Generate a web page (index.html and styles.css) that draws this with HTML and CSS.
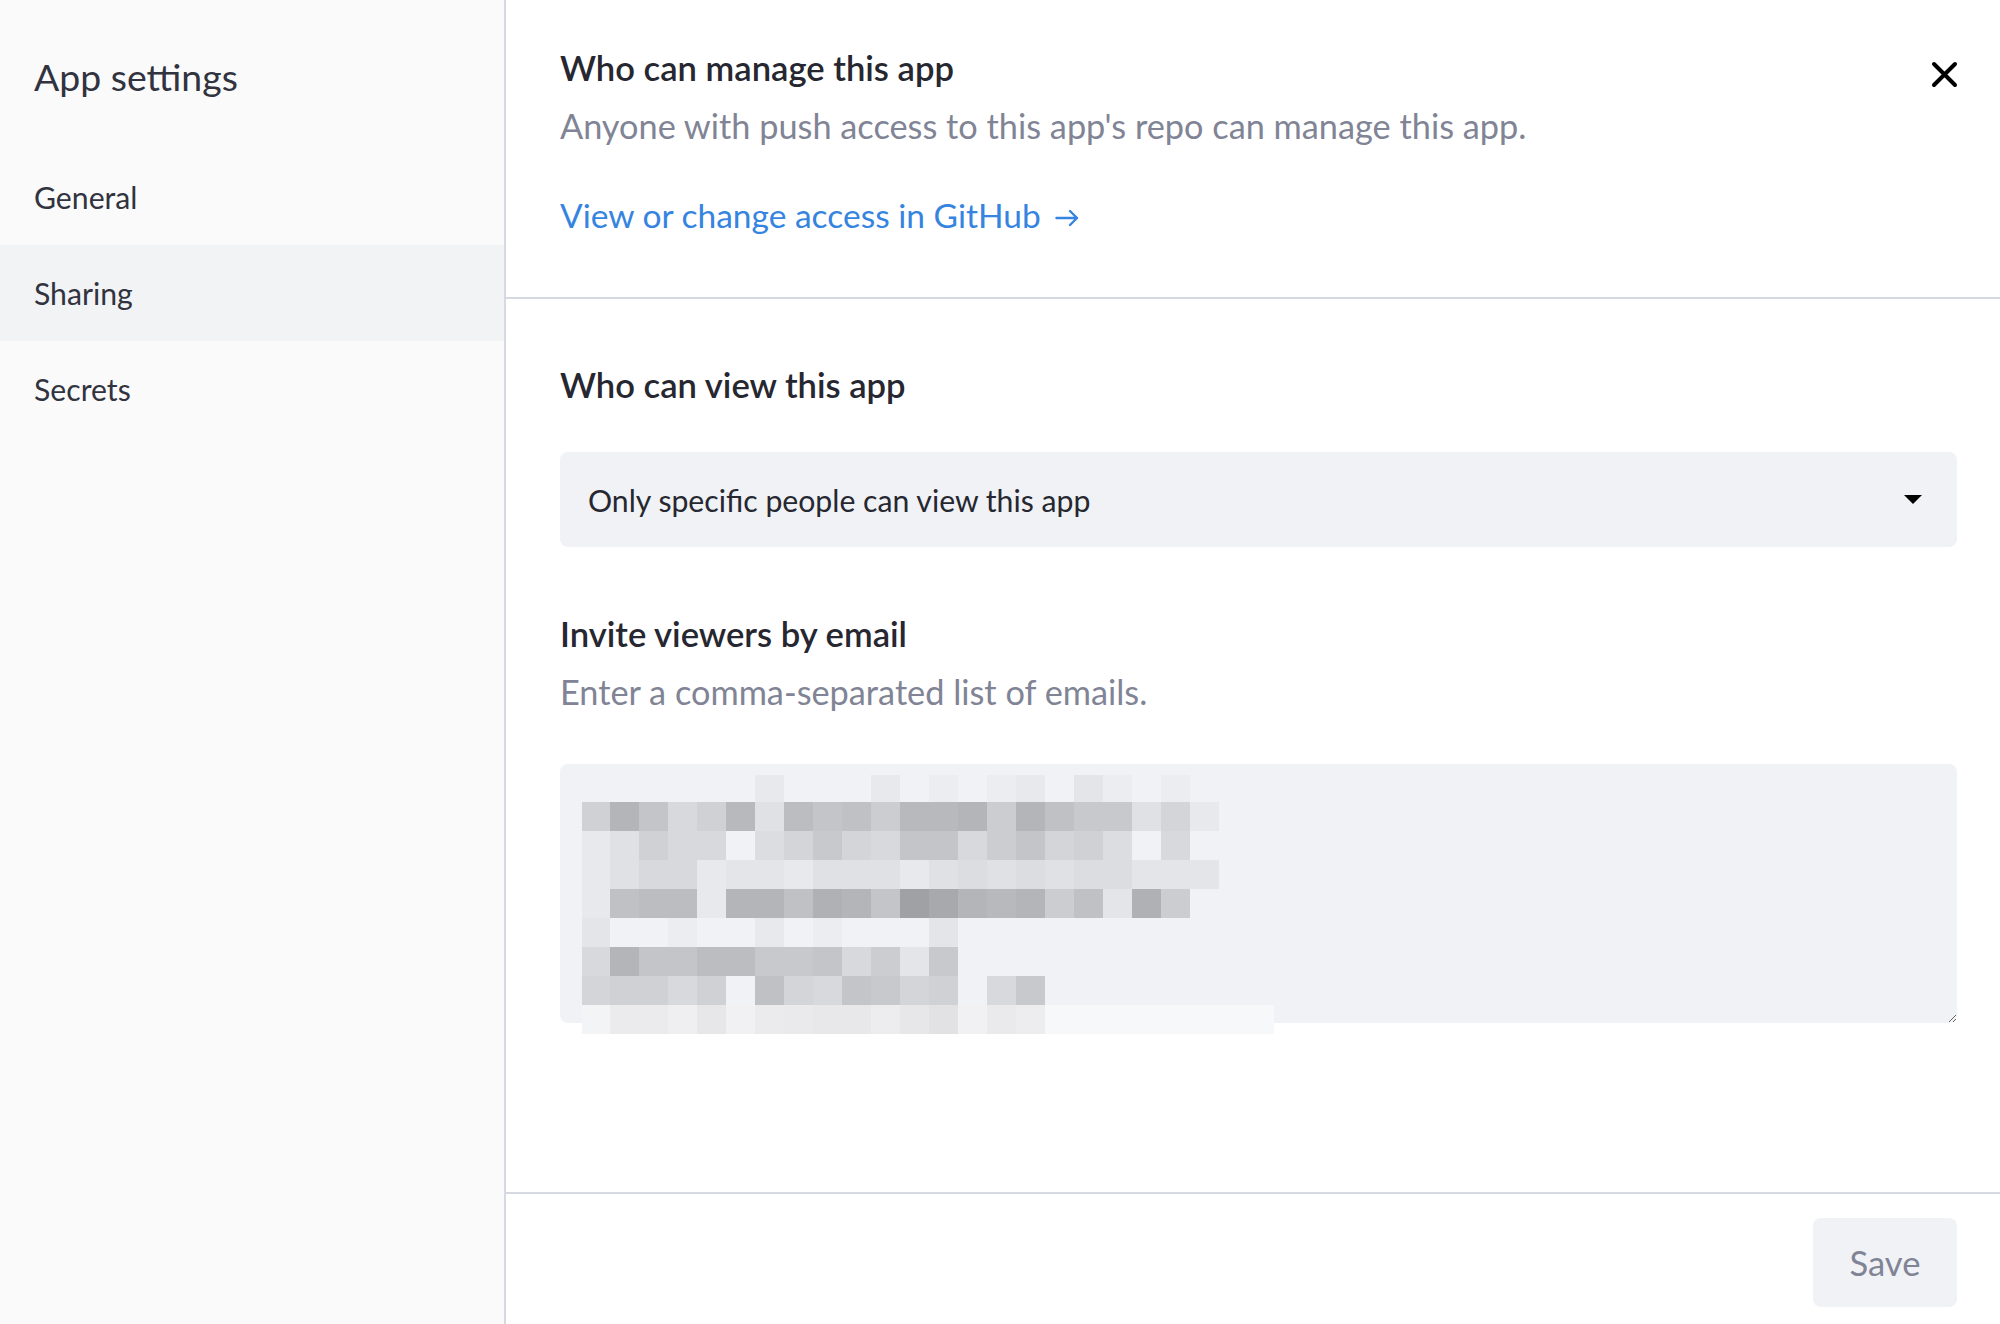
FILE: index.html
```html
<!DOCTYPE html>
<html lang="en">
<head>
<meta charset="utf-8">
<title>App settings</title>
<link rel="stylesheet" href="styles.css">
</head>
<body>
<div class="dialog">
  <aside class="sidebar">
    <h2 class="side-title">App settings</h2>
    <nav class="nav">
      <a class="nav-item">General</a>
      <a class="nav-item active">Sharing</a>
      <a class="nav-item">Secrets</a>
    </nav>
  </aside>
  <main class="panel">
    <section class="manage">
      <div class="manage-text">
        <h3 class="label">Who can manage this app</h3>
        <p class="hint">Anyone with push access to this app's repo can manage this app.</p>
        <a class="gh-link">View or change access in GitHub<svg class="arrow" width="24" height="18" viewBox="0 0 24 18"><path d="M1.5 9H22M15 2L22 9L15 16" fill="none" stroke="currentColor" stroke-width="2.4" stroke-linecap="round" stroke-linejoin="round"/></svg></a>
      </div>
      <button class="close" aria-label="Close"><svg width="27" height="27" viewBox="0 0 27 27"><path d="M3 3L24 24M24 3L3 24" stroke="#000" stroke-width="4" stroke-linecap="round"/></svg></button>
    </section>
    <section class="view">
      <h3 class="label">Who can view this app</h3>
      <div class="select"><span>Only specific people can view this app</span><svg class="caret" width="18" height="9" viewBox="0 0 18 9"><path d="M0 0H18L9 9Z" fill="#000"/></svg></div>
      <h3 class="label invite">Invite viewers by email</h3>
      <p class="hint">Enter a comma-separated list of emails.</p>
      <div class="email-box">
        <textarea class="emails" aria-label="Emails"></textarea>
        <div class="pixels" aria-hidden="true">
          <div class="pxrow r0"><span></span><span></span><span></span><span></span><span></span><span></span><span class="g-e8"></span><span></span><span></span><span></span><span class="g-e8"></span><span></span><span class="g-ec"></span><span></span><span class="g-ec"></span><span class="g-e8"></span><span></span><span class="g-e4"></span><span class="g-ec"></span><span></span><span class="g-ec"></span></div>
          <div class="pxrow"><span class="g-d0"></span><span class="g-b4"></span><span class="g-c4"></span><span class="g-d8"></span><span class="g-d0"></span><span class="g-b8"></span><span class="g-e0"></span><span class="g-bc"></span><span class="g-c4"></span><span class="g-c0"></span><span class="g-cc"></span><span class="g-b8"></span><span class="g-b8"></span><span class="g-b4"></span><span class="g-cc"></span><span class="g-b4"></span><span class="g-c0"></span><span class="g-c8"></span><span class="g-c8"></span><span class="g-e0"></span><span class="g-d4"></span><span class="g-e8"></span></div>
          <div class="pxrow"><span class="g-e8"></span><span class="g-e0"></span><span class="g-d0"></span><span class="g-d8"></span><span class="g-d8"></span><span></span><span class="g-dc"></span><span class="g-d4"></span><span class="g-c8"></span><span class="g-d4"></span><span class="g-d8"></span><span class="g-c4"></span><span class="g-c4"></span><span class="g-d8"></span><span class="g-cc"></span><span class="g-c4"></span><span class="g-d4"></span><span class="g-d0"></span><span class="g-dc"></span><span></span><span class="g-d8"></span></div>
          <div class="pxrow"><span class="g-e8"></span><span class="g-e0"></span><span class="g-d8"></span><span class="g-d8"></span><span class="g-e8"></span><span class="g-e4"></span><span class="g-e4"></span><span class="g-e8"></span><span class="g-e0"></span><span class="g-e0"></span><span class="g-e0"></span><span class="g-e8"></span><span class="g-e0"></span><span class="g-dc"></span><span class="g-e0"></span><span class="g-dc"></span><span class="g-e0"></span><span class="g-dc"></span><span class="g-dc"></span><span class="g-e4"></span><span class="g-e4"></span><span class="g-e4"></span></div>
          <div class="pxrow"><span class="g-e8"></span><span class="g-c0"></span><span class="g-bc"></span><span class="g-bc"></span><span class="g-e8"></span><span class="g-b4"></span><span class="g-b4"></span><span class="g-c0"></span><span class="g-b0"></span><span class="g-b4"></span><span class="g-c4"></span><span class="g-a0"></span><span class="g-a8"></span><span class="g-b4"></span><span class="g-b8"></span><span class="g-b4"></span><span class="g-cc"></span><span class="g-c0"></span><span class="g-e4"></span><span class="g-b0"></span><span class="g-cc"></span></div>
          <div class="pxrow"><span class="g-e4"></span><span></span><span></span><span class="g-ec"></span><span></span><span></span><span class="g-e8"></span><span></span><span class="g-ec"></span><span></span><span></span><span></span><span class="g-e4"></span></div>
          <div class="pxrow"><span class="g-d8"></span><span class="g-b4"></span><span class="g-c4"></span><span class="g-c4"></span><span class="g-bc"></span><span class="g-bc"></span><span class="g-c8"></span><span class="g-c8"></span><span class="g-c4"></span><span class="g-d8"></span><span class="g-cc"></span><span class="g-e4"></span><span class="g-c8"></span></div>
          <div class="pxrow"><span class="g-d4"></span><span class="g-d0"></span><span class="g-d0"></span><span class="g-d8"></span><span class="g-d0"></span><span></span><span class="g-c0"></span><span class="g-d4"></span><span class="g-d8"></span><span class="g-c4"></span><span class="g-c8"></span><span class="g-d4"></span><span class="g-d0"></span><span></span><span class="g-d8"></span><span class="g-c8"></span></div>
          <div class="pxrow"><span class="n-f3"></span><span class="n-eb"></span><span class="n-eb"></span><span class="n-ef"></span><span class="n-e7"></span><span class="n-f1"></span><span class="n-eb"></span><span class="n-ea"></span><span class="n-e8"></span><span class="n-e8"></span><span class="n-ed"></span><span class="n-e7"></span><span class="n-e2"></span><span class="n-f1"></span><span class="n-ea"></span><span class="n-ed"></span><span class="n-f8 wide"></span></div>
        </div>
      </div>
    </section>
    <footer class="footer"><button class="save">Save</button></footer>
  </main>
</div>
</body>
</html>
```
FILE: styles.css
```css
* { box-sizing: border-box; }
html, body { margin: 0; padding: 0; }
body {
  width: 2000px;
  height: 1324px;
  overflow: hidden;
  background: #fff;
  font-family: "Lato", "Source Sans Pro", sans-serif;
  color: #31333f;
}
.dialog { display: flex; height: 1324px; }

.sidebar {
  width: 506px;
  flex: none;
  background: #fafafa;
  border-right: 2px solid #d6d9e2;
}
.side-title {
  margin: 0;
  padding: 49px 0 0 34px;
  font-size: 37.4px;
  line-height: 56px;
  font-weight: 400;
  color: #31333f;
}
.nav { margin-top: 44px; display: flex; flex-direction: column; }
.nav-item {
  height: 96px;
  display: flex;
  align-items: center;
  padding-left: 34px;
  font-size: 30.2px;
  color: #31333f;
}
.nav-item.active { background: #f2f3f5; }

.panel { flex: 1; display: flex; flex-direction: column; min-width: 0; }

.manage {
  display: flex;
  justify-content: space-between;
  align-items: flex-start;
  padding: 44px 42px 58px 54px;
  border-bottom: 2px solid #d6d9e2;
}
.label {
  margin: 0;
  font-size: 34.6px;
  line-height: 48px;
  font-weight: 600;
  color: #262730;
}
.hint {
  margin: 10px 0 0;
  font-size: 34.3px;
  line-height: 48px;
  color: #808495;
}
.gh-link {
  margin-top: 41px;
  display: flex;
  align-items: center;
  font-size: 33.5px;
  line-height: 48px;
  color: #3584e0;
}
.arrow { margin-left: 14px; margin-top: 6px; }
.close {
  margin-top: 17px;
  padding: 0;
  border: 0;
  background: none;
  width: 27px;
  height: 27px;
  display: block;
}
.close svg { display: block; }

.view {
  flex: 1;
  padding: 62px 43px 0 54px;
}
.select {
  margin-top: 43px;
  height: 95px;
  background: #f0f2f6;
  border-radius: 8px;
  display: flex;
  align-items: center;
  justify-content: space-between;
  padding: 0 35px 0 28px;
  font-size: 30.2px;
  color: #262730;
}
.caret { display: block; }
.label.invite { margin-top: 63px; }

.email-box { position: relative; margin-top: 48px; }
.emails {
  display: block;
  width: 100%;
  height: 259px;
  border: 0;
  border-radius: 8px;
  background: #f0f2f6;
  resize: vertical;
  outline: none;
  font-family: inherit;
}
.pixels {
  position: absolute;
  left: 22px;
  top: 11px;
  pointer-events: none;
}
.pxrow { display: flex; height: 29px; }
.pxrow.r0 { height: 27px; }
.pxrow span { width: 29px; flex: none; }
.pxrow span:first-child { width: 28px; }
.pxrow span.wide { width: 229px; }

.g-a0 { background: #a0a1a5; }
.g-a8 { background: #a8a9ad; }
.g-b0 { background: #b0b1b5; }
.g-b4 { background: #b4b5b9; }
.g-b8 { background: #b8b9bd; }
.g-bc { background: #bcbdc1; }
.g-c0 { background: #c0c1c5; }
.g-c4 { background: #c4c5c9; }
.g-c8 { background: #c8c9cd; }
.g-cc { background: #cccdd1; }
.g-d0 { background: #d0d1d5; }
.g-d4 { background: #d4d5d9; }
.g-d8 { background: #d8d9dd; }
.g-dc { background: #dcdde1; }
.g-e0 { background: #e0e1e5; }
.g-e4 { background: #e4e5e9; }
.g-e8 { background: #e8e9ed; }
.g-ec { background: #ecedf1; }
.n-e2 { background: #e2e2e4; }
.n-e7 { background: #e7e7e9; }
.n-e8 { background: #e8e8ea; }
.n-ea { background: #eaeaec; }
.n-eb { background: #ebebed; }
.n-ed { background: #ededef; }
.n-ef { background: #efeff1; }
.n-f1 { background: #f1f1f3; }
.n-f3 { background: #f3f4f6; }
.n-f8 { background: #f7f8fa; }

.footer {
  flex: none;
  border-top: 2px solid #d6d9e2;
  padding: 24px 43px 17px 0;
  display: flex;
  justify-content: flex-end;
}
.save {
  width: 144px;
  height: 89px;
  border: 0;
  border-radius: 8px;
  background: #f0f2f6;
  color: #808495;
  font-family: inherit;
  font-size: 34.6px;
}
```
